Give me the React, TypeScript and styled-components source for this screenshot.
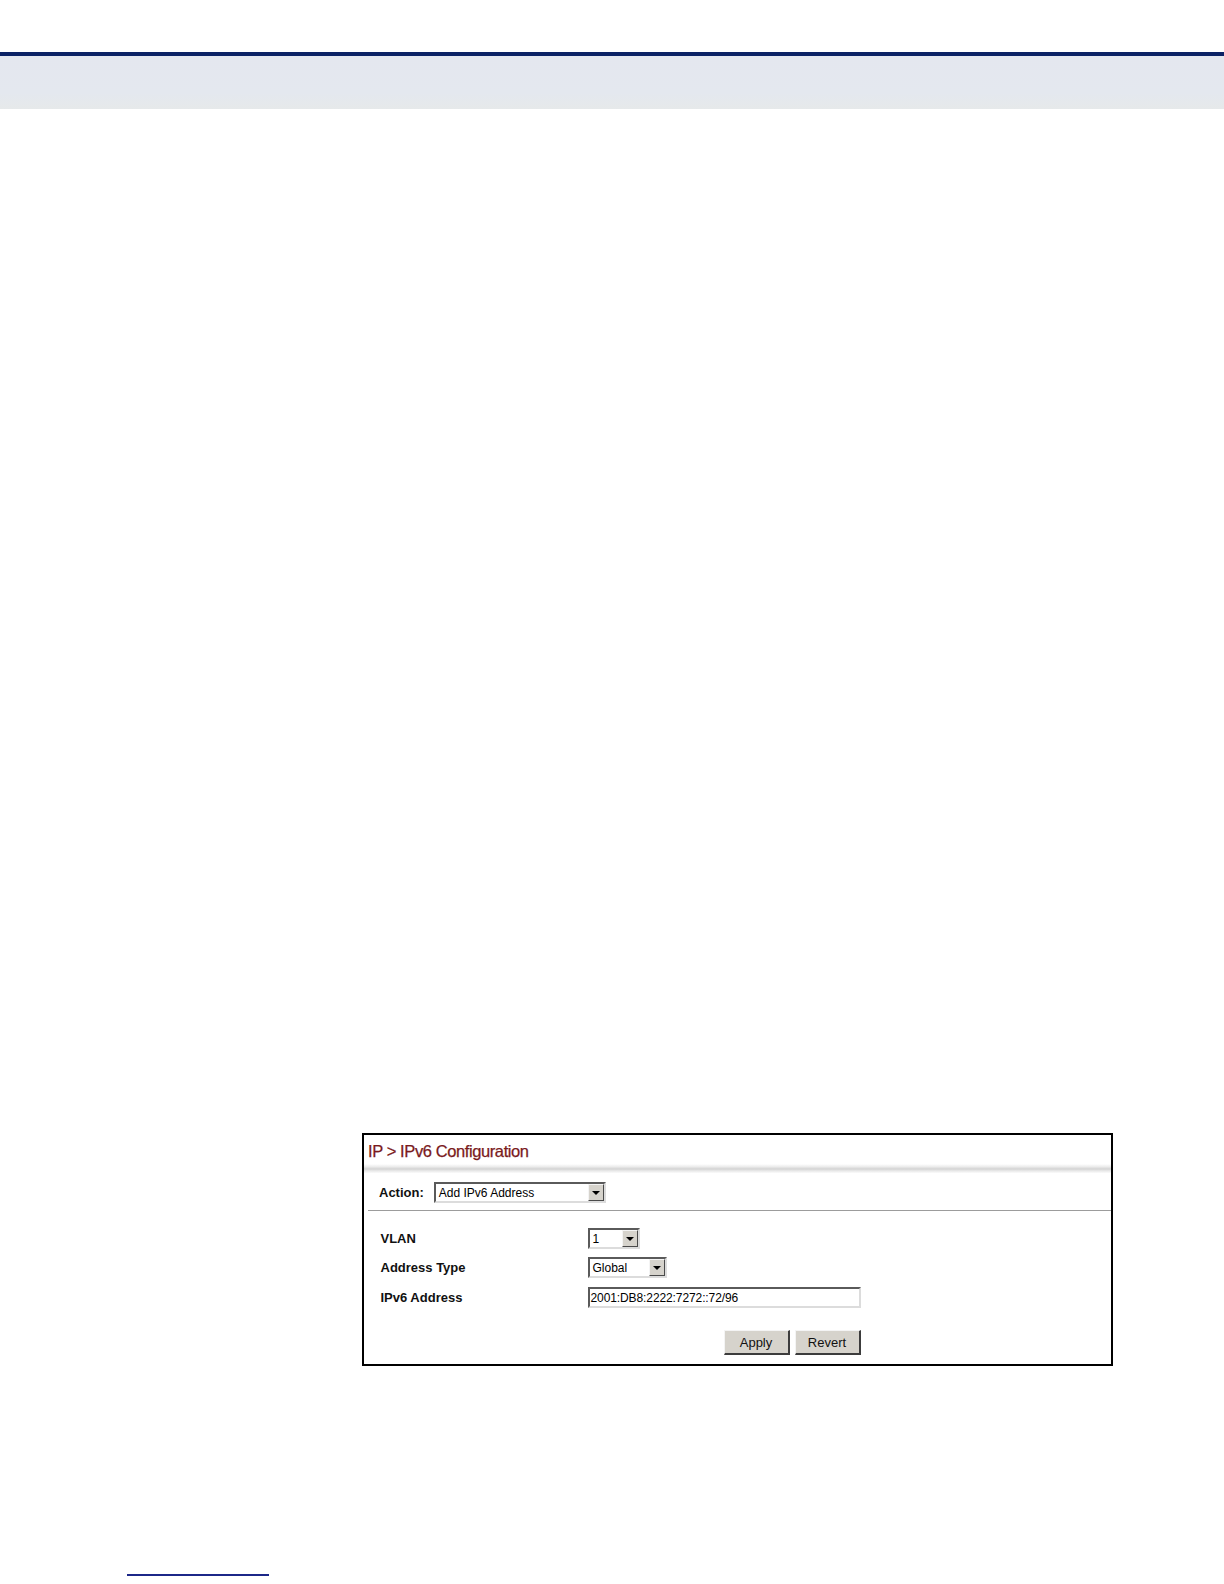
import React from "react";
import styled, { createGlobalStyle } from "styled-components";

const Global = createGlobalStyle`
  html, body { margin: 0; padding: 0; background: #ffffff; }
  body { font-family: "Liberation Sans", Arial, sans-serif; width: 1224px; }
  * { box-sizing: border-box; }
`;

const Page = styled.div`
  width: 1224px;
  min-height: 1584px;
  padding-top: 52px;
  background: #ffffff;
`;

const NavyRule = styled.div`
  height: 4px;
  background: #0b2265;
`;

const HeaderBand = styled.div`
  height: 53px;
  background: linear-gradient(to bottom, #e4e7ef 0%, #e4e8ef 70%, #e6e9ea 100%);
`;

const Main = styled.main`
  padding: 1024px 0 0 362px;
`;

const Frame = styled.section`
  width: 751px;
  border: 2px solid #000000;
  background: #ffffff;
`;

const TitleBar = styled.div`
  height: 29px;
  padding: 6px 0 0 4px;
`;

const Title = styled.h1`
  margin: 0;
  font-family: "Liberation Sans", Arial, sans-serif;
  font-weight: normal;
  font-size: 16.5px;
  line-height: 20px;
  letter-spacing: -0.4px;
  color: #7a1a1c;
  -webkit-text-stroke: 0.25px #7a1a1c;
`;

const ShadeRule = styled.div`
  height: 9px;
  background: linear-gradient(
    to bottom,
    #ffffff 0%,
    #ececec 30%,
    #d3d3d3 55%,
    #e8e8e8 75%,
    #fbfbfb 100%
  );
`;

const ActionRow = styled.div`
  height: 37px;
  display: flex;
  align-items: center;
  gap: 10px;
  padding: 2px 0 0 15px;
`;

const Divider = styled.div`
  height: 1px;
  margin-left: 4px;
  background: #9c9c9c;
`;

const Label = styled.span`
  font-size: 13px;
  font-weight: bold;
  color: #111111;
  white-space: nowrap;
`;

const FormGrid = styled.div`
  display: grid;
  grid-template-columns: 207px 273px;
  grid-template-rows: 21px 21px 21px auto;
  row-gap: 8.5px;
  align-items: center;
  padding: 16.5px 0 0 16.5px;
`;

const ButtonRow = styled.div`
  grid-column: 2;
  display: flex;
  justify-content: flex-end;
  gap: 5px;
  padding: 14px 0 9px 0;
`;

const SelectBox = styled.div<{ $w: number }>`
  width: ${(p) => p.$w}px;
  height: 21px;
  display: flex;
  align-items: stretch;
  border: 2px solid;
  border-color: #5a5a5a #dcdcdc #dcdcdc #5a5a5a;
  background: #ffffff;
`;

const SelectText = styled.span`
  flex: 1;
  padding: 1px 0 0 3px;
  font-size: 12px;
  line-height: 16px;
  color: #000000;
  white-space: nowrap;
  overflow: hidden;
`;

const ArrowButton = styled.span`
  width: 16px;
  display: flex;
  align-items: center;
  justify-content: center;
  background: #d6d3cc;
  border: 1px solid;
  border-color: #f4f4f4 #4a4a4a #4a4a4a #f4f4f4;
`;

const Triangle = styled.span`
  width: 0;
  height: 0;
  border-left: 4px solid transparent;
  border-right: 4px solid transparent;
  border-top: 4px solid #000000;
  margin-top: 1px;
`;

const TextInput = styled.div<{ $w: number }>`
  width: ${(p) => p.$w}px;
  height: 21px;
  border: 2px solid;
  border-color: #5a5a5a #dcdcdc #dcdcdc #5a5a5a;
  background: #ffffff;
  padding: 1px 0 0 1px;
  font-size: 12px;
  line-height: 16px;
  color: #000000;
  white-space: nowrap;
  letter-spacing: -0.1px;
`;

const Button = styled.button`
  width: 66px;
  height: 25px;
  padding: 0;
  background: #d6d3cc;
  border: 1px solid;
  border-width: 1px 2px 2px 1px;
  border-color: #f4f4f4 #3c3c3c #3c3c3c #f4f4f4;
  font-family: "Liberation Sans", Arial, sans-serif;
  font-size: 13px;
  color: #111111;
`;

const Footer = styled.footer`
  padding: 208px 0 0 127px;
`;

const FootRule = styled.div`
  width: 142px;
  height: 2px;
  background: #1c2788;
`;

function Select({ width, value }: { width: number; value: string }) {
  return (
    <SelectBox $w={width}>
      <SelectText>{value}</SelectText>
      <ArrowButton>
        <Triangle />
      </ArrowButton>
    </SelectBox>
  );
}

export default function App() {
  return (
    <Page>
      <Global />
      <NavyRule />
      <HeaderBand />
      <Main>
        <Frame>
          <TitleBar>
            <Title>IP &gt; IPv6 Configuration</Title>
          </TitleBar>
          <ShadeRule />
          <ActionRow>
            <Label>Action:</Label>
            <Select width={172} value="Add IPv6 Address" />
          </ActionRow>
          <Divider />
          <FormGrid>
            <Label>VLAN</Label>
            <Select width={52} value="1" />
            <Label>Address Type</Label>
            <Select width={79} value="Global" />
            <Label>IPv6 Address</Label>
            <TextInput $w={273}>2001:DB8:2222:7272::72/96</TextInput>
            <ButtonRow>
              <Button>Apply</Button>
              <Button>Revert</Button>
            </ButtonRow>
          </FormGrid>
        </Frame>
      </Main>
      <Footer>
        <FootRule />
      </Footer>
    </Page>
  );
}
